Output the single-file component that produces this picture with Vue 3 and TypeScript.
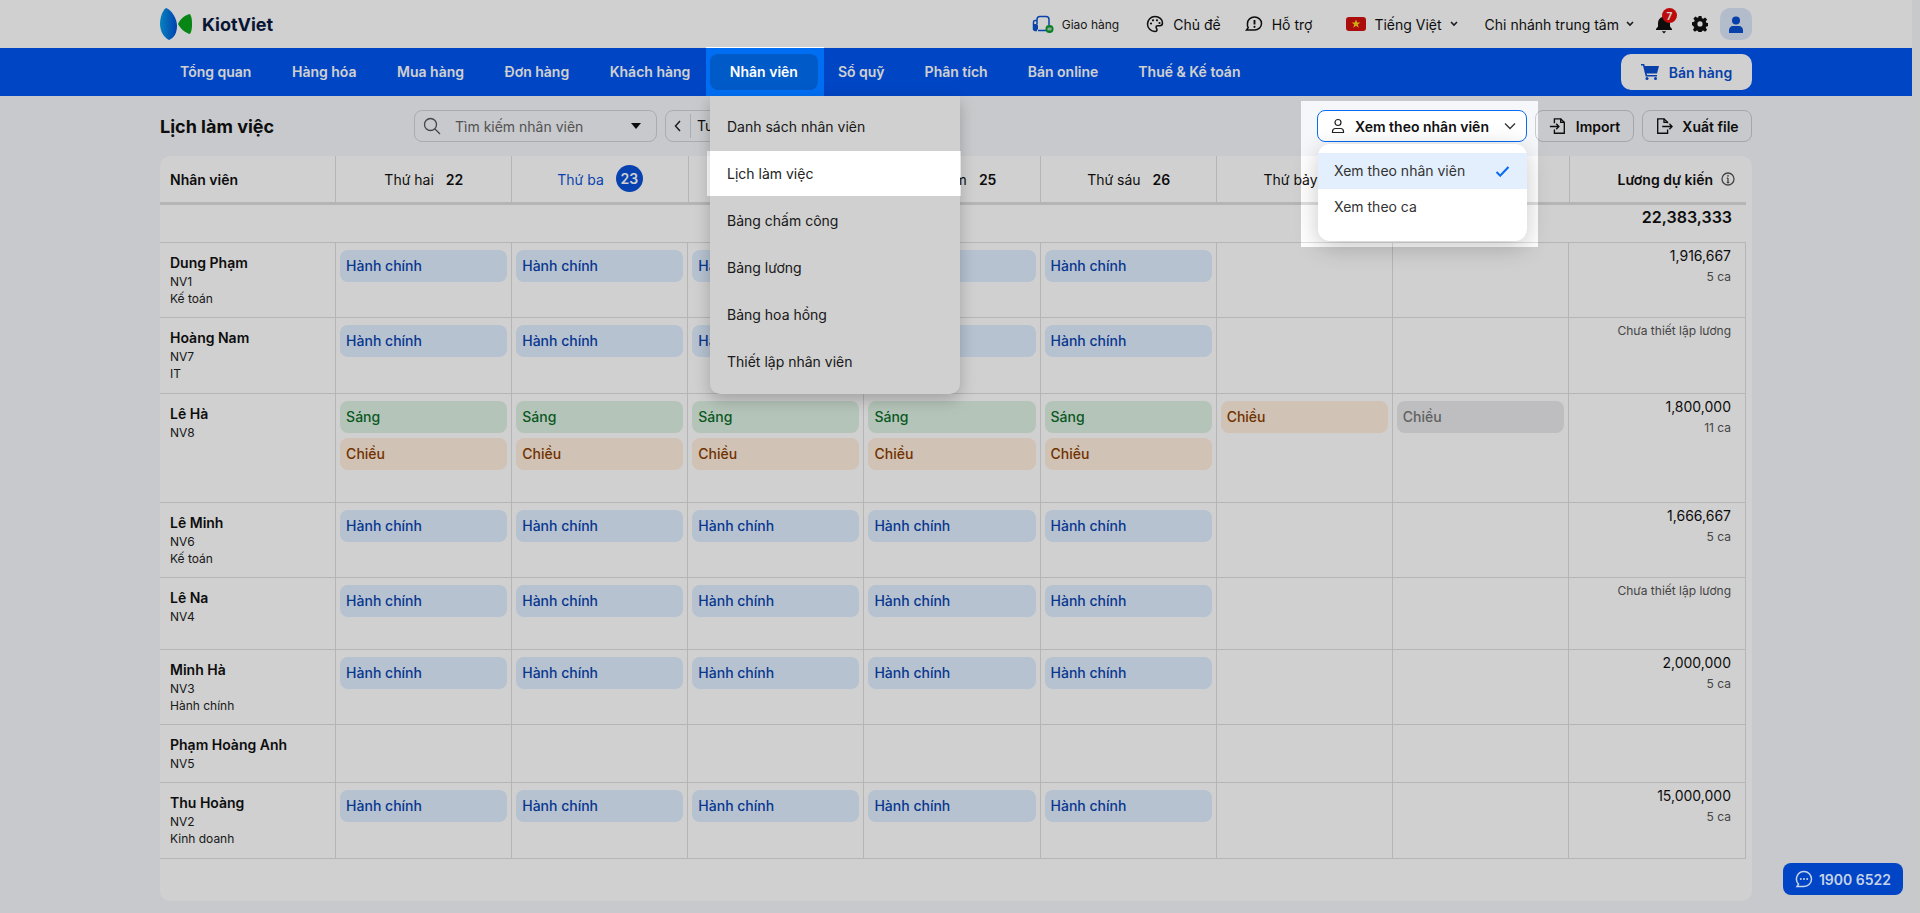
<script setup lang="ts">
type Shift = 'hc' | 'sang' | 'chieu' | 'muted'
interface Row {
  name: string
  code: string
  role?: string
  height: number
  pay?: string
  shifts?: string
  note?: string
  days: Shift[][]
}

const navItems = ['Tổng quan', 'Hàng hóa', 'Mua hàng', 'Đơn hàng', 'Khách hàng', 'Nhân viên', 'Sổ quỹ', 'Phân tích', 'Bán online', 'Thuế & Kế toán']
const menuItems = ['Danh sách nhân viên', 'Lịch làm việc', 'Bảng chấm công', 'Bảng lương', 'Bảng hoa hồng', 'Thiết lập nhân viên']
const days = [
  { label: 'Thứ hai', num: '22' },
  { label: 'Thứ ba', num: '23', today: true },
  { label: 'Thứ tư', num: '24' },
  { label: 'Thứ năm', num: '25' },
  { label: 'Thứ sáu', num: '26' },
  { label: 'Thứ bảy', num: '27' },
  { label: 'Chủ nhật', num: '28' },
]
const labels: Record<Shift, string> = { hc: 'Hành chính', sang: 'Sáng', chieu: 'Chiều', muted: 'Chiều' }
const hc: Shift[][] = [['hc'], ['hc'], ['hc'], ['hc'], ['hc'], [], []]
const rows: Row[] = [
  { name: 'Dung Phạm', code: 'NV1', role: 'Kế toán', height: 75, pay: '1,916,667', shifts: '5 ca', days: hc },
  { name: 'Hoàng Nam', code: 'NV7', role: 'IT', height: 76, note: 'Chưa thiết lập lương', days: hc },
  { name: 'Lê Hà', code: 'NV8', height: 109, pay: '1,800,000', shifts: '11 ca', days: [['sang', 'chieu'], ['sang', 'chieu'], ['sang', 'chieu'], ['sang', 'chieu'], ['sang', 'chieu'], ['chieu'], ['muted']] },
  { name: 'Lê Minh', code: 'NV6', role: 'Kế toán', height: 75, pay: '1,666,667', shifts: '5 ca', days: hc },
  { name: 'Lê Na', code: 'NV4', height: 72, note: 'Chưa thiết lập lương', days: hc },
  { name: 'Minh Hà', code: 'NV3', role: 'Hành chính', height: 75, pay: '2,000,000', shifts: '5 ca', days: hc },
  { name: 'Phạm Hoàng Anh', code: 'NV5', height: 58, days: [[], [], [], [], [], [], []] },
  { name: 'Thu Hoàng', code: 'NV2', role: 'Kinh doanh', height: 76, pay: '15,000,000', shifts: '5 ca', days: hc },
]
</script>

<template>
  <div class="page">
    <header class="topbar">
      <div class="logo">
        <svg width="32" height="32" viewBox="0 0 32 32">
          <defs>
            <linearGradient id="lg" x1="0" y1="0" x2="1" y2="0">
              <stop offset="0" stop-color="#0aa0e8" />
              <stop offset="1" stop-color="#0050d8" />
            </linearGradient>
          </defs>
          <path d="M6 0C2 3 0 10 0 16s3 13 9 16c5-2 8-7 8-14S12 2 6 0z" fill="url(#lg)" />
          <path d="M30 6c-5 1-10 5-12 10 2 4 7 9 12 10 2-3 2-7 2-10s0-7-2-10z" fill="#0aa51a" />
        </svg>
        <span class="logo-text">KiotViet</span>
      </div>
      <div class="top-right">
        <span class="top-link small">
          <svg width="22" height="18" viewBox="0 0 22 18" fill="none">
            <path d="M5 9V4.500A3 3 0 0 1 8 1.500h6a3 3 0 0 1 3 3V10" stroke="#0a54d0" stroke-width="1.500" />
            <path d="M5 5.500H3A1.500 1.500 0 0 0 1.500 7v7A1.500 1.500 0 0 0 3 15.500h2" stroke="#0a54d0" stroke-width="1.500" />
            <rect x="1" y="9" width="5" height="6" rx="1.500" fill="#0a54d0" />
            <path d="M6 15.500h8" stroke="#0a54d0" stroke-width="1.500" />
            <circle cx="17.500" cy="14" r="4" fill="#0a9a2c" />
            <path d="M15.500 13.200h4M15.500 14.800h4" stroke="#fff" stroke-width=".9" />
          </svg>
          Giao hàng
        </span>
        <span class="top-link theme">
          <svg width="18" height="18" viewBox="0 0 18 18" fill="none" stroke="#111" stroke-width="1.500">
            <path d="M9 1.500a7.500 7.500 0 0 0 0 15c1.300 0 2-.8 2-1.700 0-1.300-1-1.500-1-2.600 0-.9.700-1.400 1.600-1.400h2c1.700 0 2.900-1.200 2.900-2.800C16.500 4.300 13.200 1.500 9 1.500z" />
            <circle cx="5" cy="8.500" r="1.100" fill="#111" stroke="none" />
            <circle cx="7" cy="5.300" r="1.100" fill="#111" stroke="none" />
            <circle cx="11" cy="5.300" r="1.100" fill="#111" stroke="none" />
            <circle cx="13.500" cy="8" r="1.100" fill="#111" stroke="none" />
          </svg>
          Chủ đề
        </span>
        <span class="top-link support">
          <svg width="18" height="18" viewBox="0 0 18 18" fill="none" stroke="#111" stroke-width="1.500">
            <path d="M9.500 2c3.900 0 7 2.800 7 6.500S13.400 15 9.500 15H1.500l1.700-2.300A6.200 6.200 0 0 1 2.500 8.500C2.500 4.800 5.600 2 9.500 2z" />
            <path d="M9.500 5v4.500" stroke-width="1.900" />
            <circle cx="9.500" cy="11.800" r="1.100" fill="#111" stroke="none" />
          </svg>
          Hỗ trợ
        </span>
        <span class="top-link lang">
          <span class="flag"><svg width="10" height="10" viewBox="0 0 10 10"><path d="M5 .5l1.200 3h3.200L6.800 5.500l1 3.200L5 6.800 2.200 8.700l1-3.200L.600 3.500h3.200z" fill="#ffd21e" /></svg></span>
          Tiếng Việt
          <svg class="caret" width="8" height="6" viewBox="0 0 8 6" fill="none" stroke="#222" stroke-width="1.600"><path d="M1 1l3 3 3-3" /></svg>
        </span>
        <span class="top-link branch">
          Chi nhánh trung tâm
          <svg class="caret" width="8" height="6" viewBox="0 0 8 6" fill="none" stroke="#222" stroke-width="1.600"><path d="M1 1l3 3 3-3" /></svg>
        </span>
        <span class="bell">
          <svg width="18" height="20" viewBox="0 0 18 20" fill="#111"><path d="M9 1a1.500 1.500 0 0 0-1.500 1.500v.4C4.700 3.600 3 6 3 9v3.500L1 15v1h16v-1l-2-2.500V9c0-3-1.700-5.400-4.500-6.100v-.4A1.500 1.500 0 0 0 9 1z" /><path d="M6.800 17.200h4.400L9 19.500z" /></svg>
          <span class="badge">7</span>
        </span>
        <svg class="gear" width="16" height="16" viewBox="0 0 16 16"><path fill="#111" fill-rule="evenodd" d="M6.500 0h3l.4 2.200 1.300.6L13.100 1.500l2 2.100-1.300 1.900.5 1.300 2.200.4v2.900l-2.200.4-.5 1.300 1.300 1.900-2 2.100-1.900-1.300-1.300.6-.4 2.200h-3l-.4-2.200-1.300-.6-1.900 1.300-2-2.100 1.300-1.900-.5-1.300L0 9.100V6.200l2.200-.4.500-1.300L1.400 2.600l2-2.100 1.900 1.300 1.300-.6zM8 5.300a2.600 2.600 0 1 0 0 5.200 2.600 2.600 0 0 0 0-5.200z" /></svg>
        <span class="avatar">
          <svg width="16" height="17" viewBox="0 0 16 17" fill="#0a4fd0"><circle cx="8" cy="4.500" r="4" /><path d="M1 17v-3c0-2.200 1.800-4 4-4h6c2.200 0 4 1.800 4 4v3z" /></svg>
        </span>
      </div>
    </header>

    <nav class="navbar">
      <div class="nav-items">
        <span v-for="item in navItems" :key="item" class="nav-item" :class="{ active: item === 'Nhân viên' }">{{ item }}</span>
      </div>
      <button class="sell">
        <svg width="18" height="16" viewBox="0 0 18 16" fill="#0a4fd0"><path d="M0 0h3.200l.6 2H18l-2 7.500H5.600l.4 1.500h10v1.600H4.700L2 1.600H0z" /><circle cx="6" cy="14.500" r="1.500" /><circle cx="14.500" cy="14.500" r="1.500" /></svg>
        Bán hàng
      </button>
    </nav>

    <main class="content">
      <div class="toolbar">
        <h1 class="title">Lịch làm việc</h1>
        <div class="search">
          <svg width="18" height="18" viewBox="0 0 18 18" fill="none" stroke="#555" stroke-width="1.300"><circle cx="7.500" cy="7.500" r="6" /><path d="M12 12l5 5" /></svg>
          <span class="search-text">Tìm kiếm nhân viên</span>
          <span class="tri"></span>
        </div>
        <div class="week">
          <svg width="8" height="12" viewBox="0 0 8 12" fill="none" stroke="#222" stroke-width="1.500"><path d="M6 1L1.500 6 6 11" /></svg>
          <span class="week-text">Tuần 4</span>
        </div>
        <div class="tool-right">
          <div class="view-select">
            <svg width="16" height="16" viewBox="0 0 16 16" fill="none" stroke="#222" stroke-width="1.200"><circle cx="8" cy="4.500" r="3" /><path d="M2.500 14.500v-1c0-1.700 1.300-3 3-3h5c1.700 0 3 1.300 3 3v1z" /></svg>
            <span>Xem theo nhân viên</span>
            <svg width="12" height="8" viewBox="0 0 12 8" fill="none" stroke="#333" stroke-width="1.300"><path d="M1 1.500l5 5 5-5" /></svg>
          </div>
          <button class="tool-btn import">
            <svg width="18" height="18" viewBox="0 0 20 20" fill="none" stroke="#111" stroke-width="1.500"><path d="M6 7V2h7l4 4v12H6v-4" /><path d="M13 2v4h4" /><path d="M1 10.500h10M8 7.500l3 3-3 3" /></svg>
            Import
          </button>
          <button class="tool-btn export">
            <svg width="18" height="18" viewBox="0 0 20 20" fill="none" stroke="#111" stroke-width="1.500"><path d="M14 7V6l-4-4H3v16h11v-4" /><path d="M10 2v4h4" /><path d="M8 10.500h11M16 7.500l3 3-3 3" /></svg>
            Xuất file
          </button>
        </div>
      </div>

      <section class="card">
        <div class="head">
          <div class="hcell name-head">Nhân viên</div>
          <div v-for="d in days" :key="d.num" class="hcell day" :class="{ today: d.today }">
            <span>{{ d.label }}</span>
            <b class="num">{{ d.num }}</b>
          </div>
          <div class="hcell pay-head">
            Lương dự kiến
            <svg width="14" height="14" viewBox="0 0 14 14" fill="none" stroke="#555" stroke-width="1.300"><circle cx="7" cy="7" r="6" /><path d="M7 6v4.500M5.800 6.200H7M5.800 10.500h2.400" /><circle cx="7" cy="3.800" r=".9" fill="#555" stroke="none" /></svg>
          </div>
        </div>
        <div class="total"><span>22,383,333</span></div>
        <div class="rows">
          <div v-for="r in rows" :key="r.code" class="row" :style="{ height: r.height + 'px' }">
            <div class="cell person">
              <div class="pname">{{ r.name }}</div>
              <div class="psub">{{ r.code }}</div>
              <div v-if="r.role" class="psub">{{ r.role }}</div>
            </div>
            <div v-for="(d, i) in r.days" :key="i" class="cell shifts">
              <div v-for="(s, j) in d" :key="j" class="chip" :class="s">{{ labels[s] }}</div>
            </div>
            <div class="cell pay">
              <div v-if="r.pay" class="amount">{{ r.pay }}</div>
              <div v-if="r.shifts" class="count">{{ r.shifts }}</div>
              <div v-if="r.note" class="note">{{ r.note }}</div>
            </div>
          </div>
        </div>
      </section>
    </main>

    <div class="menu">
      <div v-for="m in menuItems" :key="m" class="menu-item">{{ m }}</div>
    </div>

    <div class="dropdown">
      <div class="opt selected">
        Xem theo nhân viên
        <svg width="15" height="11" viewBox="0 0 16 12" fill="none" stroke="#0a6cf0" stroke-width="2.300"><path d="M1.500 6.500l4 4L14.500 1" /></svg>
      </div>
      <div class="opt">Xem theo ca</div>
    </div>

    <div class="dim"></div>

    <div class="hotline">
      <svg width="18" height="18" viewBox="0 0 18 18" fill="none" stroke="#c6d3ea" stroke-width="1.500"><path d="M9 1.500a7.500 7.500 0 0 1 0 15H2l1.500-2.400A7.500 7.500 0 0 1 9 1.500z" /><circle cx="5.800" cy="9" r="1" fill="#c6d3ea" stroke="none" /><circle cx="9" cy="9" r="1" fill="#c6d3ea" stroke="none" /><circle cx="12.200" cy="9" r="1" fill="#c6d3ea" stroke="none" /></svg>
      1900 6522
    </div>
  </div>
</template>

<style>
html, body { margin: 0; background: #f5f7fa; overflow: hidden; }
</style>

<style scoped>
.page {
  position: relative;
  width: 1912px;
  height: 913px;
  overflow: hidden;
  background: #f5f7fa;
  font-family: Inter, "Noto Sans", sans-serif;
  font-size: 14px;
  color: #111;
}
.page::after {
  content: "";
  position: fixed;
  top: 0;
  right: 0;
  width: 8px;
  height: 913px;
  background: #c8c9cb;
}
.topbar {
  height: 48px;
  background: #fff;
  display: flex;
  align-items: center;
  justify-content: space-between;
  padding: 0 160px;
  box-sizing: border-box;
}
.logo { display: flex; align-items: center; gap: 10px; }
.logo-text { font-size: 18px; font-weight: 700; color: #0b1a40; }
.top-right { display: flex; align-items: center; }
.top-link { display: flex; align-items: center; gap: 9px; font-size: 14px; white-space: nowrap; }
.top-link.small { font-size: 12px; gap: 8px; margin-right: 27px; color: #222; }
.top-link.theme { margin-right: 24px; }
.top-link.support { margin-right: 34px; }
.top-link.lang { margin-right: 27px; gap: 8px; }
.top-link.branch { margin-right: 21px; gap: 7px; }
.flag { width: 20px; height: 14px; background: #d20f0f; border-radius: 3px; display: flex; align-items: center; justify-content: center; }
.bell { position: relative; display: block; width: 18px; height: 20px; margin-right: 19px; }
.badge {
  position: absolute;
  top: -6px;
  left: 7px;
  width: 15px;
  height: 15px;
  background: #e80e0e;
  border-radius: 50%;
  color: #fff;
  font-size: 10px;
  font-weight: 700;
  display: flex;
  align-items: center;
  justify-content: center;
}
.gear { margin-right: 12px; }
.avatar { width: 32px; height: 32px; border-radius: 10px; background: #dbe7f9; display: flex; align-items: center; justify-content: center; }

.navbar {
  height: 48px;
  background: #0055f0;
  display: flex;
  align-items: center;
  justify-content: space-between;
  padding: 0 160px;
  box-sizing: border-box;
}
.nav-items { display: flex; align-items: center; }
.nav-item {
  position: relative;
  height: 36px;
  line-height: 36px;
  padding: 0 20px;
  margin-right: .5px;
  font-size: 14px;
  font-weight: 600;
  color: #fff;
  white-space: nowrap;
  border-radius: 8px;
}
.nav-item.active { background: #005ac8; z-index: 0; margin: 0 0 0 -1px; }
.nav-item.active ~ .nav-item { margin-right: 0; }
.nav-item.active::before {
  content: "";
  position: absolute;
  z-index: -2;
  left: -4px;
  right: -6px;
  top: -6px;
  bottom: -6px;
  background: #006ef2;
}
.nav-item.active::after {
  content: "";
  position: absolute;
  z-index: -1;
  inset: 0;
  border-radius: 8px;
  background: #005ac8;
}
.sell {
  width: 131px;
  height: 36px;
  border: 0;
  border-radius: 10px;
  background: #fff;
  color: #0a4fd0;
  font: 600 14px Inter, sans-serif;
  display: flex;
  align-items: center;
  justify-content: center;
  gap: 10px;
}

.content { padding: 0 160px; }
.toolbar { height: 60px; display: flex; align-items: center; }
.title { margin: 0; font-size: 18px; font-weight: 700; width: 254px; }
.search {
  width: 243px;
  height: 32px;
  border: 1px solid #d0d3d8;
  border-radius: 8px;
  display: flex;
  align-items: center;
  padding: 0 10px 0 8px;
  box-sizing: border-box;
  color: #555;
  margin-right: 8px;
}
.search-text { margin-left: 14px; flex: 1; font-size: 14px; color: #666; }
.tri { width: 0; height: 0; border-left: 5px solid transparent; border-right: 5px solid transparent; border-top: 6px solid #111; margin-right: 5px; }
.week {
  width: 150px;
  height: 32px;
  border: 1px solid #d0d3d8;
  border-radius: 8px;
  display: flex;
  align-items: center;
  padding-left: 8px;
  box-sizing: border-box;
}
.week-text { margin-left: 8px; padding-left: 6px; border-left: 1px solid #d0d3d8; line-height: 24px; }
.tool-right { margin-left: auto; display: flex; align-items: center; gap: 8px; }
.view-select {
  width: 210px;
  height: 32px;
  border: 1px solid #0a6cf0;
  border-radius: 8px;
  background: #fff;
  box-sizing: border-box;
  display: flex;
  align-items: center;
  padding: 0 10px 0 12px;
  gap: 9px;
  font-weight: 600;
  font-size: 14px;
}
.view-select span { flex: 1; white-space: nowrap; }
.tool-btn {
  height: 32px;
  border: 1px solid #c8ccd2;
  border-radius: 8px;
  background: transparent;
  display: flex;
  align-items: center;
  justify-content: center;
  gap: 9px;
  padding: 0;
  box-sizing: border-box;
  font: 600 14px Inter, sans-serif;
  color: #111;
}
.tool-btn.import { width: 99px; }
.tool-btn.export { width: 110px; }

.card { height: 745px; background: #fff; border-radius: 10px; padding-right: 6px; box-sizing: border-box; }
.head, .row { display: grid; grid-template-columns: repeat(9, 1fr); }
.head { border-bottom: 3px solid #dedede; height: 46px; }
.hcell { border-right: 1px solid #dedede; display: flex; align-items: center; justify-content: center; gap: 8px; white-space: nowrap; font-size: 14px; }
.name-head { justify-content: flex-start; padding-left: 10px; font-weight: 600; }
.pay-head { border-right: 0; font-weight: 600; justify-content: flex-end; padding-right: 11px; }
.day .num { font-weight: 600; margin-left: 4px; }
.day.today { color: #0a52d8; }
.day.today .num { margin-left: 4px; margin-top: -1px; width: 27px; height: 27px; border-radius: 50%; background: #0a52d8; color: #fff; display: flex; align-items: center; justify-content: center; font-size: 14px; }
.total { height: 38px; border-bottom: 1px solid #dedede; box-sizing: border-box; display: flex; align-items: flex-start; justify-content: flex-end; padding: 2px 14px 0 0; line-height: 20px; font-size: 16px; font-weight: 600; }
.rows { border-right: 1px solid #dedede; }
.row { border-bottom: 1px solid #dedede; box-sizing: border-box; }
.cell { border-right: 1px solid #dedede; box-sizing: border-box; min-width: 0; }
.cell:last-child { border-right: 0; }
.person { padding: 10px 0 0 10px; }
.pname { font-weight: 600; font-size: 14px; line-height: 20px; }
.psub { font-size: 12px; line-height: 17px; color: #222; }
.shifts { padding: 7px 4px 0 4px; display: flex; flex-direction: column; gap: 5px; }
.chip { height: 32px; line-height: 32px; border-radius: 8px; padding: 0 6px; font-size: 14px; font-weight: 500; }
.chip.hc { background: #dfeeff; color: #0a44b0; }
.chip.sang { background: #def1e3; color: #0c6d2a; }
.chip.chieu { background: #ffeedd; color: #8a3d00; }
.chip.muted { background: #e9e9ec; color: #777; }
.pay { text-align: right; padding: 3px 14px 0 0; }
.amount { font-size: 14px; line-height: 20px; color: #111; }
.count { font-size: 12px; line-height: 20px; color: #555; margin-top: 1px; }
.note { font-size: 12px; line-height: 20px; color: #555; }

.menu {
  position: absolute;
  left: 710px;
  top: 96px;
  width: 250px;
  height: 298px;
  background: #fff;
  border-radius: 0 0 10px 10px;
  box-shadow: 0 6px 16px rgba(0, 0, 0, .22);
  padding-top: 7px;
  box-sizing: border-box;
}
.menu-item { height: 47px; line-height: 47px; padding-left: 17px; font-size: 14px; color: #222; }

.dropdown {
  position: absolute;
  left: 1318px;
  top: 144px;
  width: 209px;
  height: 97px;
  background: #fff;
  border-radius: 12px;
  box-sizing: border-box;
  padding-top: 9px;
  box-shadow: 0 6px 24px rgba(0, 0, 0, .22);
}
.opt { height: 36px; line-height: 36px; padding: 0 17px 0 16px; font-size: 14px; color: #333; display: flex; align-items: center; justify-content: space-between; }
.opt.selected { background: #e3effc; }

.dim {
  position: fixed;
  inset: 0;
  background: rgba(0, 0, 0, .185);
  clip-path: path(evenodd, "M0 0H1920V913H0Z M706 47H824V96H706Z M707 151H961V196H707Z M1301 101H1538V247H1301Z");
}
.hotline {
  position: absolute;
  left: 1783px;
  top: 863px;
  width: 120px;
  height: 32px;
  border-radius: 8px;
  background: #0045c5;
  color: #c6d3ea;
  font-size: 14px;
  font-weight: 600;
  display: flex;
  align-items: center;
  justify-content: center;
  gap: 6px;
}
</style>
